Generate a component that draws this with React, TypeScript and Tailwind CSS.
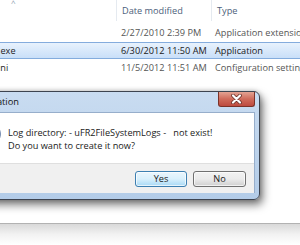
import React from 'react';

const rows = [
  { name: '', date: '2/27/2010 2:39 PM', type: 'Application extension' },
  { name: '.exe', date: '6/30/2012 11:50 AM', type: 'Application', selected: true },
  { name: 'ini', date: '11/5/2012 11:51 AM', type: 'Configuration settings' },
];

function CloseGlyph() {
  return (
    <svg width="13" height="10" viewBox="0 0 13 10">
      <path d="M3 1.5 L10 8.5 M10 1.5 L3 8.5" stroke="#6a3028" strokeWidth="3.8" strokeLinecap="round" />
      <path d="M3 1.5 L10 8.5 M10 1.5 L3 8.5" stroke="#ffffff" strokeWidth="2.2" strokeLinecap="round" />
    </svg>
  );
}

function QuestionIcon() {
  return (
    <svg width="22" height="22" viewBox="0 0 22 22">
      <defs>
        <radialGradient id="q" cx="0.4" cy="0.35" r="0.7">
          <stop offset="0" stopColor="#d8e6f6" />
          <stop offset="0.6" stopColor="#7f9fcf" />
          <stop offset="1" stopColor="#3e5f9a" />
        </radialGradient>
      </defs>
      <circle cx="11" cy="11" r="10.5" fill="url(#q)" />
      <circle cx="11" cy="11" r="10.5" fill="none" stroke="#6f86aa" strokeWidth="0.8" />
    </svg>
  );
}

export default function App() {
  return (
    <div
      className="relative w-[300px] h-[245px] overflow-hidden bg-white flex flex-col text-[9.2px]"
      style={{ fontFamily: '"Open Sans", "Noto Sans", sans-serif' }}
    >
      {/* Explorer header */}
      <div className="h-[21px] flex text-[#4c607a]">
        <div className="w-[116px] relative">
          <span className="absolute left-[11px] top-[-3px] text-[#8a9bb0] text-[8px]">^</span>
        </div>
        <div className="w-[95px] border-l border-[#e5eaf0] pl-[5px] flex items-center">Date modified</div>
        <div className="flex-1 border-l border-[#e5eaf0] pl-[5px] flex items-center">Type</div>
      </div>

      {/* Rows */}
      <div className="mt-[4px] flex flex-col gap-[1px]">
        {rows.map((r, i) => (
          <div
            key={i}
            className={
              r.selected
                ? 'h-[17px] flex items-center border-y border-[#84acdd] bg-gradient-to-b from-[#e8f2fd] to-[#c9dff8] text-[#1a1a1a]'
                : 'h-[16px] flex items-center text-[#555]'
            }
          >
            <div className="w-[116px] text-[#1e1e1e] -ml-[2px]">{r.name}</div>
            <div className="w-[95px] pl-[7px] whitespace-nowrap">{r.date}</div>
            <div className="flex-1 pl-[6px] whitespace-nowrap overflow-hidden">{r.type}</div>
          </div>
        ))}
      </div>

      {/* Background window edge */}
      <div className="mt-auto h-[22px] border-t border-[#b2b2b2] bg-gradient-to-b from-[#d9d9d9] via-[#f2f2f2] to-white" />

      {/* Dialog */}
      <div className="absolute left-[-150px] top-[91px] w-[410px] h-[109px] flex flex-col border border-[#3d4450] rounded-tr-[6px] rounded-br-[6px] bg-gradient-to-b from-[#c9dcf1] to-[#b3cce8] shadow-[3px_5px_9px_rgba(0,0,0,0.5),0_0_5px_rgba(0,0,0,0.25)]">
        {/* Title bar */}
        <div className="h-[20px] flex">
          <div className="w-[168px] flex items-center justify-end text-[9.3px] text-[#141414]">Confirmation</div>
          <div className="flex-1" />
          <div className="w-[37px] h-[15px] mr-[4px] rounded-b-[3px] border border-t-0 border-[#7b3228] bg-gradient-to-b from-[#e3a393] via-[#cf6b5b] to-[#bd4a3f] flex items-center justify-center">
            <CloseGlyph />
          </div>
        </div>

        {/* Content panel */}
        <div className="mx-[4px] flex flex-col border-t border-r border-[#97aecb]">
          <div className="h-[50px] bg-white flex pl-[124px] pt-[10px] gap-[7px]">
            <QuestionIcon />
            <div className="pt-[4px] leading-[12.5px] text-[#1a1a1a] text-[9.2px] whitespace-pre">
              <div>{'Log directory: - uFR2FileSystemLogs -   not exist!'}</div>
              <div>Do you want to create it now?</div>
            </div>
          </div>
          <div className="h-[30px] bg-[#f0f0f0] border-t border-[#dfdfdf] flex justify-end items-start pt-[7px] pr-[8px] gap-[6px] text-[9.2px] text-[#1a1a1a]">
            <div className="w-[52px] h-[16px] rounded-[3px] border border-[#3c7fb1] bg-gradient-to-b from-[#eaf6fd] via-[#d9f0fc] to-[#a7d9f5] shadow-[inset_0_0_0_1px_rgba(255,255,255,0.7)] flex items-center justify-center">
              Yes
            </div>
            <div className="w-[53px] h-[16px] rounded-[3px] border border-[#707070] bg-gradient-to-b from-[#f2f2f2] via-[#ebebeb] to-[#cfcfcf] shadow-[inset_0_0_0_1px_rgba(255,255,255,0.7)] flex items-center justify-center">
              No
            </div>
          </div>
        </div>
      </div>
    </div>
  );
}
